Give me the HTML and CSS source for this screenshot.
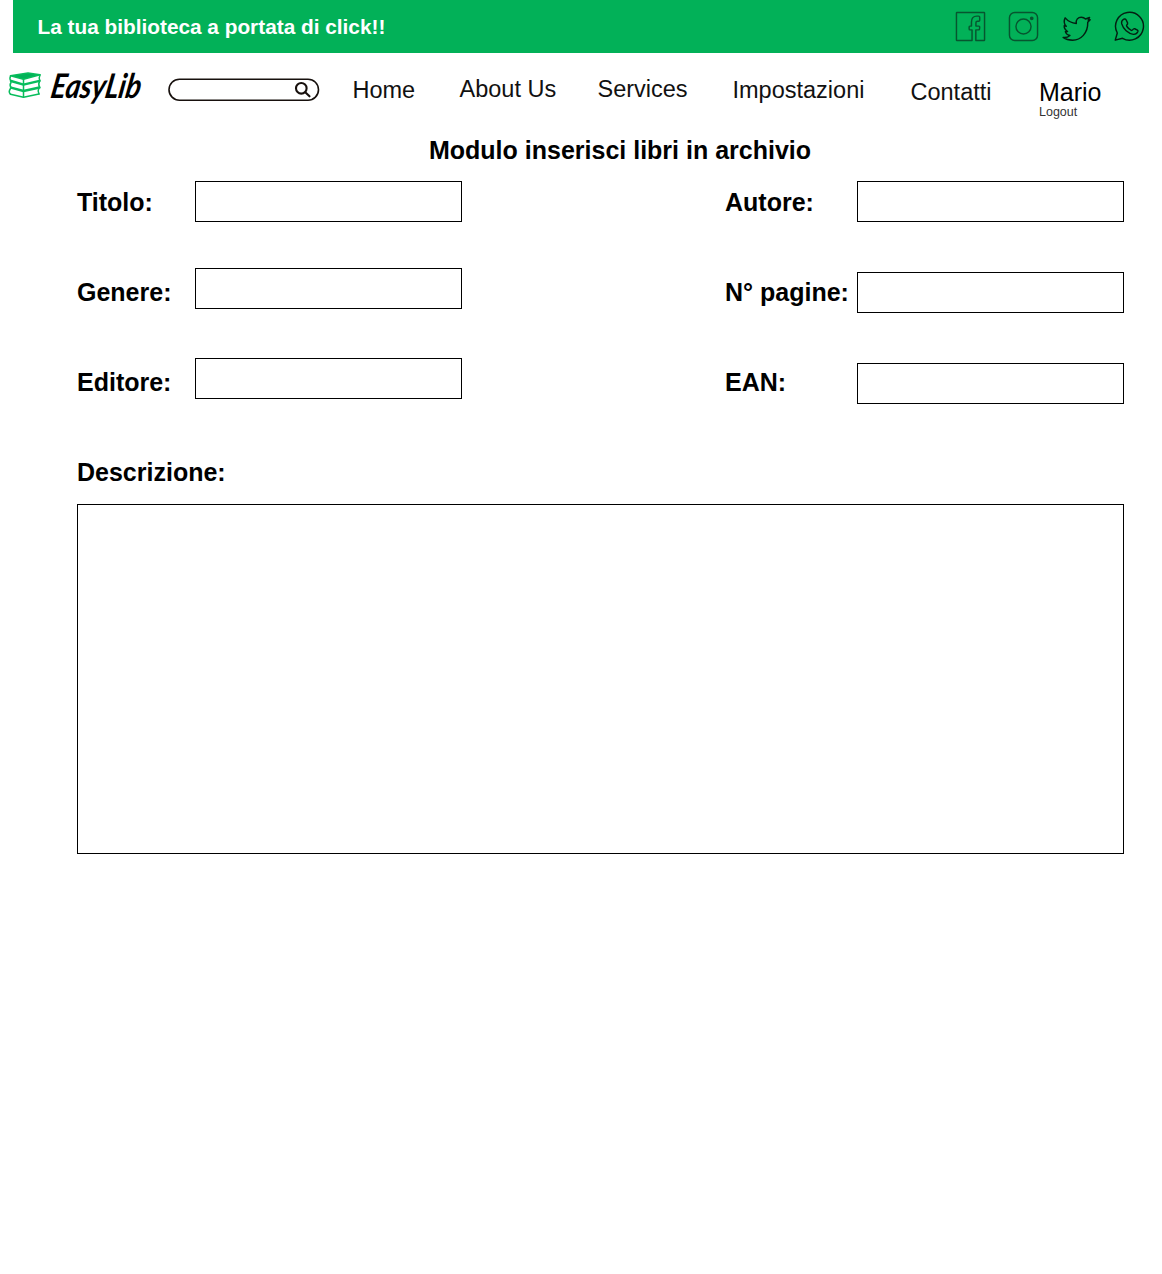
FILE: index.html
```html
<!DOCTYPE html>
<html lang="it">
<head>
<meta charset="utf-8">
<title>EasyLib</title>
<link rel="stylesheet" href="styles.css">
</head>
<body>
<header class="banner">
  <p class="slogan">La tua biblioteca a portata di click!!</p>
  <div class="social">
    <svg class="icon soft" viewBox="0 0 32 32"><path d="M17.600 30.500H2Q1.500 30.500 1.500 30V2Q1.500 1.500 2 1.500H30Q30.500 1.500 30.500 2V30Q30.500 30.500 30 30.500H21.500V19.500H24.500Q25.200 19.500 25.300 18.800L25.500 16.500Q25.500 15.600 24.700 15.600H21.600V12Q21.600 10.500 23.200 10.500H24.500Q25.500 10.500 25.500 9.500V6.500Q25.500 5.300 24.500 5.300H22.500Q17 5.300 17 11.500V15.600H15.400Q14.600 15.600 14.600 16.400V18.700Q14.600 19.500 15.400 19.500H17.600Z"/></svg>
    <svg class="icon soft" viewBox="0 0 32 32"><rect x="1.500" y="1.500" width="29" height="29" rx="5.500"/><circle cx="16" cy="16" r="7.800"/><circle cx="24.500" cy="7.500" r="1.200" fill="#07552f"/></svg>
    <svg class="icon" viewBox="0 0 32 32"><path d="M2.200 27.300C5 27.700 7.500 26.800 9.200 25.300C6.500 24.700 4.900 23 4.500 21.300L6.800 21.200C4.300 19.700 3.200 17.700 3.300 15.300L5.400 15.800C3.100 13.400 2.600 10.400 4.300 7.100C7.300 10.600 11.200 12.500 15.800 12.900C15 8.900 17.700 6.400 20.900 6.400C22.700 6.400 24.200 7.100 25.300 8.300L29.500 6.700L28 9.500L30.100 9.100L27.600 11.700C28 22.900 20.300 30.200 12 30.200C8.200 30.200 4.700 29.200 2.200 27.300Z"/></svg>
    <svg class="icon" viewBox="0 0 32 32"><path d="M1.300 30.100L3.400 22.700A14.400 14.400 0 1 1 8.800 28.200Z"/><path d="M10.300 8.300Q11.800 7.800 12.600 9.300L14 12.200Q14.300 13.300 13.200 14.400Q12.700 15.200 13.300 16Q15.200 18.800 17.900 20Q18.600 20.200 19.200 19.500Q20.300 17.800 21.400 18.300L24.200 19.700Q25 20.300 24.600 21.500Q23.400 24.300 20 24.100C14.500 23.400 9.600 18.700 8 13.300C7.500 11 8.800 9 10.300 8.300Z"/></svg>
  </div>
</header>

<nav class="nav">
  <a class="logo" href="#" aria-label="EasyLib">
    <svg class="logo-art" viewBox="0 0 140 46">
      <g class="books">
        <path class="cover" d="M2.500 8.800L20 6L32 7.800L15.500 12.200Z"/>
        <path d="M2.500 9Q1.200 12 3 14M32 8Q30.500 11 31.800 13.800M15.500 12V17"/>
        <path d="M3 15.500Q1.200 18 3 20.500M31.500 14.500Q30 17 31.500 20.300M15.500 18V23.500"/>
        <path d="M2.500 21.500Q0 25 2.500 27.300M31 20.500Q29.500 23.500 31 27M15.500 24.500V30"/>
        <path class="spine" d="M3 14L15.500 17.600L31.500 13.800M3 20.700L15.500 24L31.500 20.500"/>
        <path d="M2.500 27.300L15.500 30.300L31 27"/>
      </g>
      <text class="wordmark" x="0" y="0" textLength="90" lengthAdjust="spacingAndGlyphs" transform="translate(41.500 30.500) skewX(-10)">EasyLib</text>
    </svg>
  </a>
  <svg class="search" viewBox="0 0 152 24">
    <rect x="1" y="1.200" width="149.500" height="21" rx="10.500"/>
    <g class="lens"><circle cx="133.300" cy="10.300" r="5.300"/><path d="M137.500 14.500L141.500 18.300"/></g>
  </svg>
  <a class="link home" href="#">Home</a>
  <a class="link about" href="#">About Us</a>
  <a class="link services" href="#">Services</a>
  <a class="link settings" href="#">Impostazioni</a>
  <a class="link contacts" href="#">Contatti</a>
  <div class="user">
    <span class="name">Mario</span>
    <a class="logout" href="#">Logout</a>
  </div>
</nav>

<main class="content">
  <h1 class="title">Modulo inserisci libri in archivio</h1>
  <form class="form">
    <div class="columns">
      <div class="column left">
        <label class="row"><span class="label">Titolo:</span><input class="field"></label>
        <label class="row"><span class="label">Genere:</span><input class="field"></label>
        <label class="row"><span class="label">Editore:</span><input class="field"></label>
      </div>
      <div class="column right">
        <label class="row"><span class="label">Autore:</span><input class="field"></label>
        <label class="row"><span class="label">N° pagine:</span><input class="field"></label>
        <label class="row"><span class="label">EAN:</span><input class="field"></label>
      </div>
    </div>
    <label class="description"><span class="label">Descrizione:</span><textarea class="area"></textarea></label>
  </form>
</main>
</body>
</html>
```
FILE: styles.css
```css
* { box-sizing: border-box; }

body {
  margin: 0;
  min-height: 1274px;
  background: #fff;
  color: #000;
  font-family: "Liberation Sans", Arial, sans-serif;
}

a { color: inherit; text-decoration: none; }

.banner {
  display: flex;
  justify-content: space-between;
  width: 1136px;
  height: 53px;
  margin-left: 13px;
  padding: 11px 4.500px 0 24.500px;
  background: #02b158;
}

.slogan {
  margin: 0;
  color: #fff;
  font-size: 20.800px;
  font-weight: 700;
  line-height: 32px;
  white-space: nowrap;
}

.social { display: flex; gap: 21.700px; }

.icon {
  width: 31px;
  height: 31px;
  fill: none;
  stroke: #032012;
  stroke-width: 1.500;
  stroke-linejoin: round;
}

.icon.soft { stroke: #07552f; }

.nav {
  display: flex;
  align-items: flex-start;
  height: 82px;
  padding-left: 8px;
}

.logo { flex: none; width: 160px; padding-top: 14px; }
.logo-art { display: block; width: 140px; height: 46px; overflow: visible; }
.books { fill: none; stroke: #08bd5c; stroke-width: 1.500; stroke-linejoin: round; stroke-linecap: round; }
.books .cover { fill: #02b158; }
.books .spine { stroke-width: 2.400; }
.wordmark { font: italic 700 34px Lato, sans-serif; }

.search {
  flex: none;
  width: 152px;
  height: 24px;
  margin-top: 25px;
  fill: none;
  stroke: #17100d;
  stroke-width: 1.600;
}

.lens { stroke-width: 2.100; stroke-linecap: round; }

.link {
  flex: none;
  color: #111;
  font-size: 23.500px;
  line-height: 30px;
  white-space: nowrap;
}

.home { width: 107px; margin: 22px 0 0 32.500px; }
.about { width: 138px; margin-top: 21px; }
.services { width: 135px; margin-top: 21px; }
.settings { width: 178px; margin-top: 22px; }
.contacts { width: 128.500px; margin-top: 24px; }

.user { display: flex; flex-direction: column; padding-top: 24px; }
.name { font-size: 25px; line-height: 30px; }
.logout { margin-top: -2px; color: #333; font-size: 12.500px; line-height: 15px; }

.content { padding-left: 77px; }

.title {
  width: 1086px;
  margin: 0;
  font-size: 25px;
  font-weight: 700;
  line-height: 30px;
  text-align: center;
}

.form { width: 1047px; }

.columns {
  display: flex;
  justify-content: space-between;
  height: 277px;
  padding-top: 16px;
}

.column { display: flex; flex-direction: column; }
.row { display: flex; flex: none; height: 90px; }
.label { font-size: 25px; font-weight: 700; line-height: 30px; white-space: nowrap; }
.left .label { width: 118px; padding-top: 6px; }
.right .label { width: 132px; padding-top: 6px; }

.field {
  width: 267px;
  height: 41px;
  padding: 0 8px;
  border: 1px solid #000;
  border-radius: 0;
  outline: 0;
  font: 20px "Liberation Sans", sans-serif;
}

.left .row:nth-child(n+2) .field { margin-top: -3px; }
.right .row:nth-child(2) .field { margin-top: 1px; }
.right .row:nth-child(3) .field { margin-top: 2px; }

.description { display: flex; flex-direction: column; padding-top: 15px; }

.area {
  width: 1047px;
  height: 350px;
  margin-top: 17px;
  padding: 8px;
  border: 1px solid #000;
  outline: 0;
  resize: none;
  font: 20px "Liberation Sans", sans-serif;
}
```
